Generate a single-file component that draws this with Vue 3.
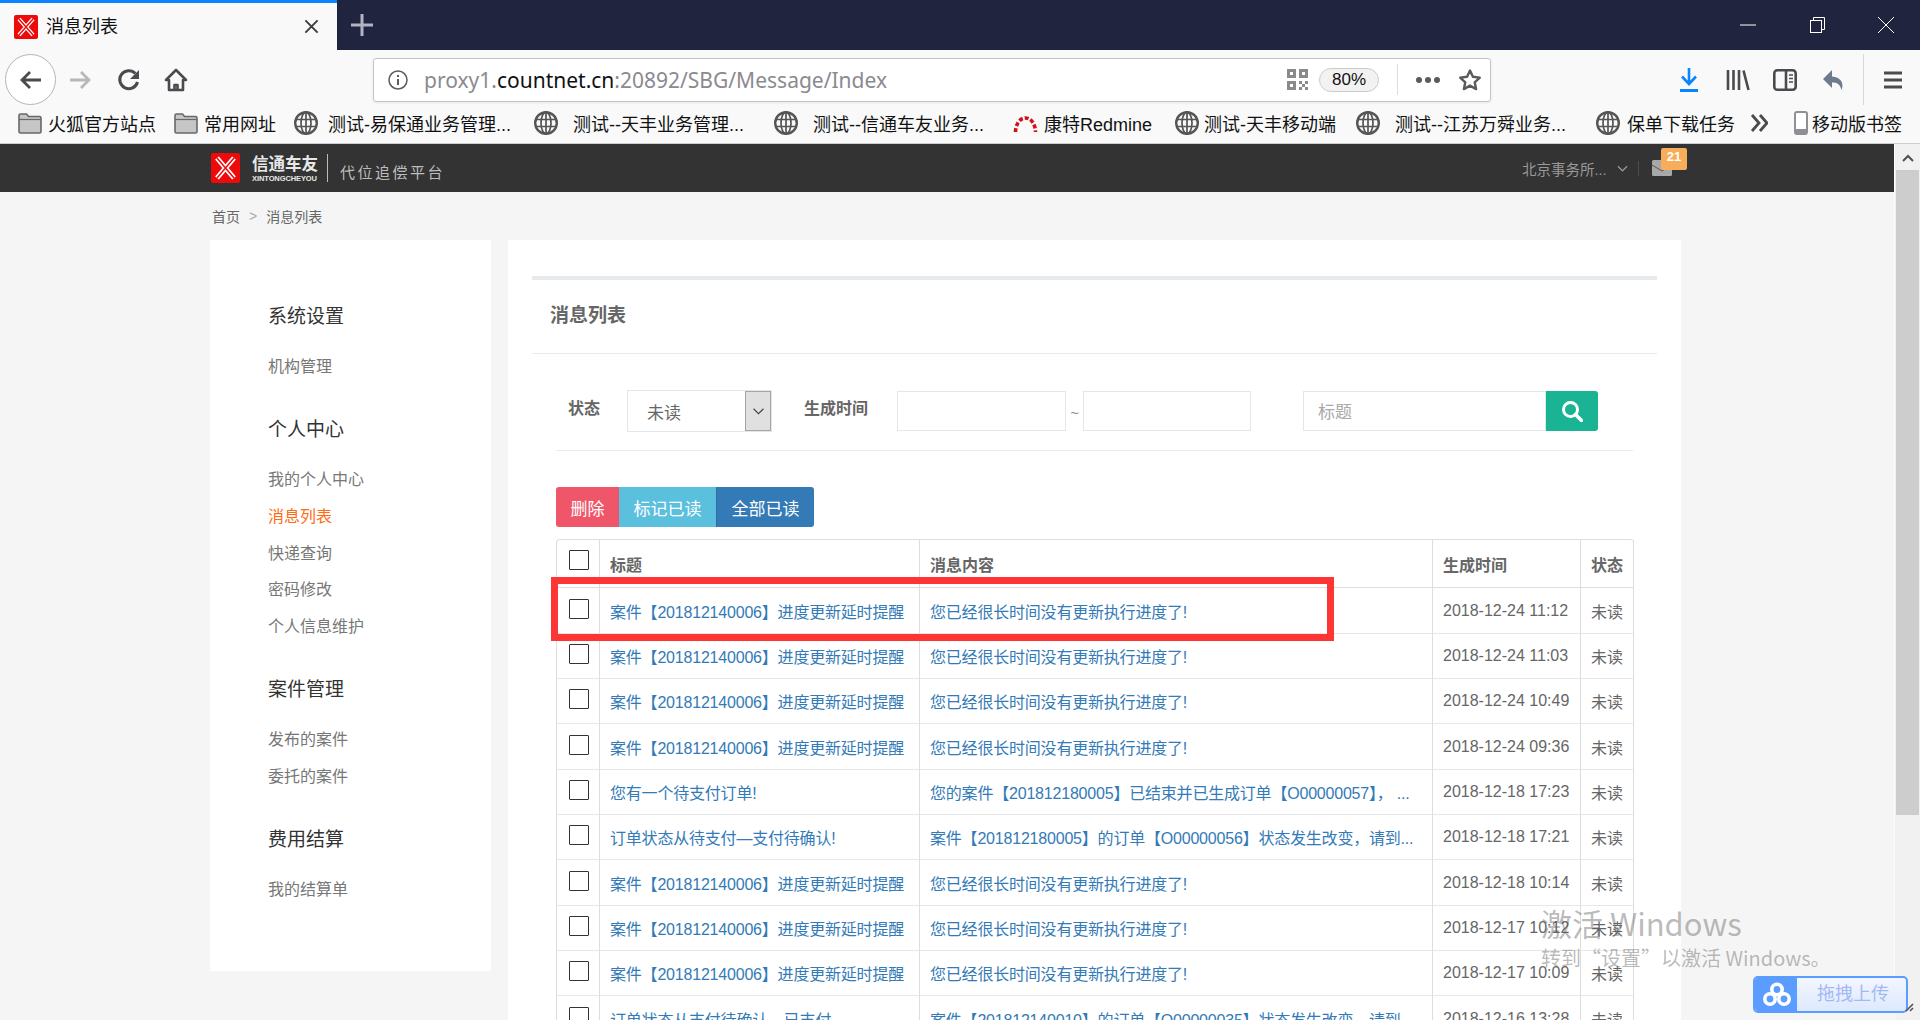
<script setup>
const bookmarks = [
  { icon: 'folder', text: '火狐官方站点', x: 18, w: 156, gap: 6 },
  { icon: 'folder', text: '常用网址', w: 120, gap: 6 },
  { icon: 'globe', text: '测试-易保通业务管理...', w: 240, gap: 10 },
  { icon: 'globe', text: '测试--天丰业务管理...', w: 240, gap: 15 },
  { icon: 'globe', text: '测试--信通车友业务...', w: 239, gap: 15 },
  { icon: 'redmine', text: '康特Redmine', w: 162, gap: 6 },
  { icon: 'globe', text: '测试-天丰移动端', w: 181, gap: 5 },
  { icon: 'globe', text: '测试--江苏万舜业务...', w: 240, gap: 15 },
  { icon: 'globe', text: '保单下载任务', w: 141, gap: 7 }
]
const sideGroups = [
  { title: '系统设置', items: ['机构管理'] },
  { title: '个人中心', items: ['我的个人中心', '消息列表', '快递查询', '密码修改', '个人信息维护'] },
  { title: '案件管理', items: ['发布的案件', '委托的案件'] },
  { title: '费用结算', items: ['我的结算单'] }
]
const t1 = '案件【201812140006】进度更新延时提醒'
const c1 = '您已经很长时间没有更新执行进度了!'
const rows = [
  [t1, c1, '2018-12-24 11:12'],
  [t1, c1, '2018-12-24 11:03'],
  [t1, c1, '2018-12-24 10:49'],
  [t1, c1, '2018-12-24 09:36'],
  ['您有一个待支付订单!', '您的案件【201812180005】已结束并已生成订单【O00000057】， ...', '2018-12-18 17:23'],
  ['订单状态从待支付—支付待确认!', '案件【201812180005】的订单【O00000056】状态发生改变，请到...', '2018-12-18 17:21'],
  [t1, c1, '2018-12-18 10:14'],
  [t1, c1, '2018-12-17 10:12'],
  [t1, c1, '2018-12-17 10:09'],
  ['订单状态从支付待确认—已支付', '案件【201812140010】的订单【O00000035】状态发生改变，请到...', '2018-12-16 13:28']
]
</script>

<template>
  <div class="app">
    <div class="tabbar">
      <div class="tab">
        <svg class="favicon" viewBox="0 0 24 24">
          <rect width="24" height="24" rx="2" fill="#ee0a0a" />
          <path d="M5 4l14 16M19 4L5 20" stroke="#fff" stroke-width="4" fill="none" />
          <path d="M5 4l14 16M19 4L5 20" stroke="#ee0a0a" stroke-width="1.4" fill="none" />
        </svg>
        <span class="tab-title">消息列表</span>
        <svg class="tab-close" viewBox="0 0 16 16"><path d="M1.5 1.5l13 13M14.5 1.5l-13 13" stroke="#3a3a3f" stroke-width="2" /></svg>
      </div>
      <svg class="newtab" viewBox="0 0 22 22"><path d="M11 0v22M0 11h22" stroke="#b2b4c2" stroke-width="3" /></svg>
      <div class="winctl">
        <svg class="w-min" viewBox="0 0 16 16"><path d="M0 8h16" stroke="#fff" stroke-width="1" /></svg>
        <svg class="w-max" viewBox="0 0 15 16" fill="none" stroke="#fff" stroke-width="1"><rect x=".5" y="3.5" width="11" height="12" /><path d="M3.5 3.500V.5h11v12h-3" /></svg>
        <svg class="w-close" viewBox="0 0 16 16"><path d="M0 0l16 16M16 0L0 16" stroke="#fff" stroke-width="1" /></svg>
      </div>
    </div>

    <div class="toolbar">
      <div class="back-circle">
        <svg viewBox="0 0 24 24" class="ic24"><path d="M22 12H3M11 4l-8 8 8 8" fill="none" stroke="#4a4a4f" stroke-width="2.800" /></svg>
      </div>
      <svg viewBox="0 0 24 24" class="ic24 fwd"><path d="M2 12h19M13 4l8 8-8 8" fill="none" stroke="#b8b8ba" stroke-width="2.800" /></svg>
      <svg viewBox="0 0 24 24" class="ic24 reload"><path d="M20.500 14a9 9 0 1 1-2.200-8.500" fill="none" stroke="#4a4a4f" stroke-width="3" /><path d="M22 2v9h-9z" fill="#4a4a4f" /></svg>
      <svg viewBox="0 0 24 24" class="ic24 home"><path d="M12 2L2 12h3v10h14V12h3zM10.500 22v-5h3v5" fill="none" stroke="#4a4a4f" stroke-width="2.600" stroke-linejoin="round" /></svg>
      <div class="urlbar">
        <svg viewBox="0 0 20 20" class="info"><circle cx="10" cy="10" r="9" fill="none" stroke="#5a5a5f" stroke-width="1.500" /><path d="M10 9v6M10 5v2" stroke="#5a5a5f" stroke-width="2" /></svg>
        <div class="url"><span class="dim">proxy1.</span><span class="strong">countnet.cn</span><span class="dim">:20892/SBG/Message/Index</span></div>
        <svg viewBox="0 0 21 21" class="qr">
          <path d="M0 0h9v9H0zM12 0h9v9h-9zM0 12h9v9H0z" fill="#8a8a8a" />
          <path d="M3 3h3v3H3zM15 3h3v3h-3zM3 15h3v3H3z" fill="#fff" />
          <path d="M12 12h3v3h-3zM18 12h3v3h-3zM15 15h3v3h-3zM12 18h3v3h-3zM18 18h3v3h-3z" fill="#8a8a8a" />
        </svg>
        <div class="zoom">80%</div>
        <div class="url-sep"></div>
        <div class="dots"><i></i><i></i><i></i></div>
        <svg viewBox="0 0 24 24" class="ic24 star"><path d="M12 2.500l2.900 6.300 6.900.8-5.100 4.700 1.400 6.800-6.100-3.500-6.100 3.500 1.400-6.800L2.200 9.600l6.900-.8z" fill="none" stroke="#5a5a5f" stroke-width="2.400" stroke-linejoin="round" /></svg>
      </div>
      <svg viewBox="0 0 18 24" class="dl"><path d="M9 0v15M2 8.500l7 7.500 7-7.500" fill="none" stroke="#0a84ff" stroke-width="2.600" /><path d="M0 22.500h18" stroke="#0a84ff" stroke-width="3" /></svg>
      <svg viewBox="0 0 24 24" class="ic24 lib"><path d="M2 2v20M7.500 2v20M13 2v20M17.500 2.500l5 19.500" fill="none" stroke="#4a4a4f" stroke-width="2.600" /></svg>
      <svg viewBox="0 0 24 24" class="ic24 side"><rect x="1.300" y="2.300" width="21.400" height="19.400" rx="3" fill="none" stroke="#4a4a4f" stroke-width="2.600" /><path d="M13 3v18" stroke="#4a4a4f" stroke-width="2.600" /><path d="M16 7h4M16 10.500h4M16 14h4" stroke="#4a4a4f" stroke-width="1.400" /></svg>
      <svg viewBox="0 0 24 24" class="ic24 undo"><path d="M10 2L1 11l9 9v-5.500c5 0 8 1.500 9.500 7.500 3-7-1-13-9.500-13.500z" fill="#6d7b8a" /></svg>
      <div class="tool-sep"></div>
      <svg viewBox="0 0 18 18" class="burger"><path d="M0 2h18M0 9h18M0 16h18" stroke="#4a4a4f" stroke-width="3" /></svg>
    </div>

    <div class="bookmarks">
      <div v-for="b in bookmarks" :key="b.text" class="bm" :style="{ width: b.w + 'px' }">
        <svg v-if="b.icon === 'folder'" viewBox="0 0 24 22" class="bm-ic"><path d="M1 3.500a1.500 1.500 0 0 1 1.500-1.500h6l2 2.500h11A1.500 1.500 0 0 1 23 6v13.500a1.500 1.500 0 0 1-1.500 1.500h-19A1.500 1.500 0 0 1 1 19.500z" fill="#c6c6c6" stroke="#68686a" stroke-width="1.600" /><path d="M1 7.500h22" stroke="#68686a" stroke-width="1.200" /></svg>
        <svg v-else-if="b.icon === 'globe'" viewBox="0 0 24 24" class="bm-ic"><g fill="none" stroke="#555" stroke-width="1.700"><circle cx="12" cy="12" r="10.800" stroke-width="2.400" /><ellipse cx="12" cy="12" rx="5" ry="10.800" /><path d="M1 8.500h22M1 15.500h22M12 1v22" /></g></svg>
        <svg v-else viewBox="0 0 25 22" class="bm-ic redmine"><path d="M2.500 20A10 14 0 0 1 22.500 20" fill="none" stroke="#d3101a" stroke-width="3.600" stroke-dasharray="4 2" /></svg>
        <span class="bm-text" :style="{ marginLeft: b.gap + 'px' }">{{ b.text }}</span>
      </div>
      <svg viewBox="0 0 18 20" class="chev"><path d="M2 2l7 8-7 8M10 2l7 8-7 8" fill="none" stroke="#4a4a4f" stroke-width="2.800" /></svg>
      <svg viewBox="0 0 14 24" class="phone"><rect x="1" y="1" width="12" height="22" rx="2" fill="#fff" stroke="#8f8f94" stroke-width="2" /><path d="M1 18h12v4H1z" fill="#8f8f94" /></svg>
      <span class="bm-text">移动版书签</span>
    </div>

    <div class="page">
      <div class="page-main">
        <header class="head">
          <svg viewBox="0 0 29 30" class="logo">
            <rect width="29" height="30" rx="2" fill="#ee0a0a" />
            <path d="M6 5l17 20M23 5L6 25" stroke="#fff" stroke-width="5" fill="none" />
            <path d="M6 5l17 20M23 5L6 25" stroke="#ee0a0a" stroke-width="1.500" fill="none" />
          </svg>
          <div class="brand">
            <div class="brand-cn">信通车友</div>
            <div class="brand-en">XINTONGCHEYOU</div>
          </div>
          <div class="brand-sep"></div>
          <div class="slogan">代位追偿平台</div>
          <div class="head-right">
            <span class="org">北京事务所...</span>
            <svg viewBox="0 0 12 7" class="org-chev"><path d="M1 1l5 5 5-5" fill="none" stroke="#999" stroke-width="1.300" /></svg>
            <div class="head-sep"></div>
            <div class="mail">
              <svg viewBox="0 0 20 16" class="mail-ic"><rect width="20" height="16" rx="1.500" fill="#a8a8a8" /><path d="M0 5l10 6 10-6" fill="none" stroke="#555" stroke-width="1" /></svg>
              <span class="badge">21</span>
            </div>
          </div>
        </header>

        <div class="crumb"><span>首页</span><span class="crumb-gt">&gt;</span><span>消息列表</span></div>

        <div class="content">
          <aside class="sidebar">
            <section v-for="g in sideGroups" :key="g.title" class="s-group">
              <h3 class="s-title">{{ g.title }}</h3>
              <a v-for="i in g.items" :key="i" class="s-item" :class="{ active: i === '消息列表' }">{{ i }}</a>
            </section>
          </aside>

          <main class="panel">
            <h2 class="panel-title">消息列表</h2>
            <div class="panel-body">
              <div class="filter">
                <label class="f-label f-status">状态</label>
                <div class="select"><span class="select-val">未读</span><span class="select-btn"><svg viewBox="0 0 10 6"><path d="M.5.5L5 5 9.500.5" fill="none" stroke="#444" stroke-width="1" /></svg></span></div>
                <label class="f-label f-time">生成时间</label>
                <input class="inp inp-date" />
                <span class="tilde">~</span>
                <input class="inp inp-date2" />
                <input class="inp inp-title" placeholder="标题" />
                <button class="search"><svg viewBox="0 0 22 22"><circle cx="9.500" cy="9.500" r="7" fill="none" stroke="#fff" stroke-width="3" /><path d="M14.500 14.500l6 6" stroke="#fff" stroke-width="3.600" stroke-linecap="round" /></svg></button>
              </div>
              <div class="actions">
                <button class="btn b-del">删除</button>
                <button class="btn b-mark">标记已读</button>
                <button class="btn b-all">全部已读</button>
              </div>
              <table class="tbl">
                <colgroup><col class="c1" /><col class="c2" /><col class="c3" /><col class="c4" /><col class="c5" /></colgroup>
                <thead>
                  <tr><th><span class="cb"></span></th><th>标题</th><th>消息内容</th><th>生成时间</th><th>状态</th></tr>
                </thead>
                <tbody>
                  <tr v-for="(r, i) in rows" :key="i">
                    <td><span class="cb"></span></td>
                    <td><a>{{ r[0] }}</a></td>
                    <td><a>{{ r[1] }}</a></td>
                    <td>{{ r[2] }}</td>
                    <td>未读</td>
                  </tr>
                </tbody>
              </table>
            </div>
          </main>
        </div>
      </div>

      <div class="vscroll">
        <svg viewBox="0 0 12 8" class="v-up"><path d="M1 7l5-5 5 5" fill="none" stroke="#505050" stroke-width="2" /></svg>
        <div class="v-thumb"></div>
      </div>
    </div>

    <div class="redbox"></div>
    <div class="watermark">
      <div class="wm1">激活 Windows</div>
      <div class="wm2">转到“设置”以激活 Windows。</div>
    </div>
    <div class="upload">
      <span class="up-ic"><svg viewBox="0 0 30 26" fill="none" stroke="#fff" stroke-width="3.600"><circle cx="16" cy="7.500" r="5.200" /><circle cx="9" cy="17" r="5.200" /><circle cx="23" cy="17" r="5.200" /></svg></span>
      <span class="up-text">拖拽上传</span>
    </div>
    <svg class="grip" viewBox="0 0 9 9"><path d="M1 8l7-7M5 8l3-3" stroke="#555" stroke-width="1.600" /></svg>
  </div>
</template>

<style>
html, body { margin: 0; padding: 0; overflow: hidden; }
</style>

<style scoped>
* { box-sizing: border-box; }
.app {
  position: relative; width: 1920px; height: 1020px; overflow: hidden;
  font-family: "Liberation Sans", "Noto Sans CJK SC", sans-serif; color: #666;
  display: flex; flex-direction: column; background: #f9f9fa;
}
svg { display: block; flex: none; }
.tabbar { height: 50px; background: #20243f; display: flex; align-items: flex-start; flex: none; }
.tab { width: 337px; height: 50px; background: #f9f9fa; border-top: 3px solid #0a84ff; display: flex; align-items: center; padding-left: 14px; }
.favicon { width: 24px; height: 24px; }
.tab-title { margin-left: 8px; font-size: 18px; color: #111; width: 258px; padding-bottom: 4px; }
.tab-close { width: 15px; height: 15px; }
.newtab { width: 22px; height: 22px; margin: 14px 0 0 14px; }
.winctl { margin-left: auto; display: flex; align-items: center; height: 50px; }
.w-min { width: 16px; height: 16px; margin-right: 54px; }
.w-max { width: 15px; height: 16px; margin-right: 53px; }
.w-close { width: 16px; height: 16px; margin-right: 26px; }

.toolbar { height: 52px; flex: none; display: flex; align-items: center; padding: 7px 0 0 5px; }
.ic24 { width: 24px; height: 24px; }
.back-circle { width: 51px; height: 51px; flex: none; border-radius: 50%; border: 1px solid #b5b5b5; background: #fff; display: flex; align-items: center; justify-content: center; }
.fwd { margin-left: 12px; }
.reload { margin-left: 25px; }
.home { margin-left: 23px; }
.urlbar { width: 1118px; height: 44px; margin-left: 185px; border: 1px solid #c4c4c4; border-radius: 3px; background: #fff; display: flex; align-items: center; padding-left: 14px; box-shadow: 0 1px 3px rgba(0,0,0,.08); }
.info { width: 20px; height: 20px; }
.url { margin-left: 16px; width: 863px; font-family: "Noto Sans", "Noto Sans CJK SC", sans-serif; font-size: 21px; white-space: nowrap; line-height: 40px; }
.dim { color: #8a8a8f; }
.strong { color: #111; }
.qr { width: 21px; height: 21px; }
.zoom { margin-left: 11px; width: 60px; height: 24px; border: 1px solid #ccc; border-radius: 12px; background: #f2f2f2; font-size: 17px; color: #111; text-align: center; line-height: 22px; }
.url-sep { width: 1px; height: 31px; background: #ddd; margin-left: 18px; }
.dots { margin-left: 18px; display: flex; gap: 3px; }
.dots i { width: 6px; height: 6px; border-radius: 50%; background: #5a5a5f; }
.star { margin-left: 18px; }
.dl { width: 18px; height: 24px; margin-left: 189px; }
.lib { margin-left: 28px; }
.side { margin-left: 23px; }
.undo { margin-left: 25px; }
.tool-sep { width: 1px; height: 51px; background: #d8d8d8; margin-left: 17px; }
.burger { width: 18px; height: 18px; margin-left: 20px; }

.bookmarks { height: 42px; flex: none; display: flex; align-items: center; padding-left: 18px; border-bottom: 1px solid #cfcfcf; white-space: nowrap; }
.bm { display: flex; align-items: center; overflow: hidden; flex: none; }
.bm-ic { width: 24px; height: 24px; }
.redmine { width: 25px; height: 22px; }
.bm-text { font-size: 18px; color: #111; }
.chev { width: 18px; height: 20px; margin-left: 13px; }
.phone { width: 14px; height: 24px; margin-left: 26px; margin-right: 4px; }

.page { flex: 1; display: flex; min-height: 0; background: #f5f5f5; }
.page-main { flex: 1; min-width: 0; overflow: hidden; }
.head { height: 48px; background: #333; display: flex; align-items: center; padding-left: 211px; }
.logo { width: 29px; height: 30px; }
.brand { margin-left: 12px; width: 65px; color: #e8e8e8; text-align: center; }
.brand-cn { font-size: 16.500px; font-weight: 700; line-height: 21px; white-space: nowrap; }
.brand-en { font-size: 7.500px; font-weight: 700; line-height: 8px; letter-spacing: -.1px; white-space: nowrap; }
.brand-sep { width: 1px; height: 28px; background: #bbb; margin-left: 10px; }
.slogan { margin-left: 12px; font-size: 15px; letter-spacing: 2.500px; color: #bdbdbd; margin-top: 6px; }
.head-right { margin-left: auto; display: flex; align-items: center; padding-right: 222px; }
.org { font-size: 14.500px; color: #999; width: 84px; white-space: nowrap; }
.org-chev { width: 11px; height: 7px; margin-left: 11px; }
.head-sep { width: 1px; height: 15px; background: #4c4c4c; margin-left: 10px; }
.mail { position: relative; margin-left: 13px; width: 20px; height: 16px; }
.mail-ic { width: 20px; height: 16px; }
.badge { position: absolute; left: 9px; top: -12px; width: 26px; height: 22px; background: #f8ad5a; border-radius: 2px; color: #fff; font-size: 13px; font-weight: 700; text-align: center; line-height: 18px; }

.crumb { height: 48px; padding-left: 212px; display: flex; align-items: center; font-size: 14px; color: #666; }
.crumb-gt { color: #aaa; margin: 0 9px; }
.content { display: flex; padding-left: 210px; gap: 17px; align-items: flex-start; }
.sidebar { width: 281px; height: 731px; background: #fff; padding: 61px 0 0 58px; }
.s-group { margin-bottom: 28.500px; }
.s-title { margin: 0; font-size: 19px; font-weight: 400; color: #333; line-height: 32px; }
.s-item { display: block; font-size: 16px; color: #777; line-height: 36.700px; }
.s-item:first-of-type { margin-top: 16px; }
.s-item.active { color: #ff6a13; }

.panel { width: 1173px; height: 900px; background: #fff; padding: 36px 24px 0; }
.panel-title { margin: 0; height: 78px; border-top: 4px solid #e7eaec; border-bottom: 1px solid #e7eaec; font-size: 19px; font-weight: 700; color: #666; padding-left: 18px; line-height: 72px; }
.panel-body { padding: 0 24px; }
.filter { height: 97px; padding-top: 37px; border-bottom: 1px solid #e7eaec; display: flex; align-items: flex-start; }
.f-label { font-size: 16px; font-weight: 700; color: #666; line-height: 36px; }
.f-status { margin-left: 12px; width: 32px; }
.select { margin-left: 27px; width: 145px; height: 42px; margin-top: -1px; border: 1px solid #e5e6e7; display: flex; justify-content: space-between; background: #fff; }
.select-val { margin-left: 19px; font-size: 17px; line-height: 46px; color: #666; }
.select-btn { width: 26px; height: 40px; background: #e0e0e0; border: 1px solid #a5a5a5; display: flex; align-items: center; justify-content: center; }
.select-btn svg { width: 11px; height: 7px; }
.f-time { margin-left: 32px; }
.inp { height: 40px; border: 1px solid #e5e6e7; background: #fff; outline: none; padding: 3px 14px 0; font-size: 17px; font-family: inherit; }
.inp::placeholder { color: #a9a9a9; }
.inp-date { margin-left: 29px; width: 169px; }
.tilde { width: 17px; text-align: center; font-size: 14px; color: #888; line-height: 44px; }
.inp-date2 { width: 168px; }
.inp-title { margin-left: 52px; width: 243px; }
.search { width: 52px; height: 40px; border: 0; padding: 0; background: #1ab394; border-radius: 0 3px 3px 0; display: flex; align-items: center; justify-content: center; }
.search svg { width: 22px; height: 22px; }
.actions { display: flex; margin-top: 36px; }
.btn { height: 40px; border: 0; padding: 0; color: #fff; font-size: 17px; font-family: inherit; }
.b-del { width: 63px; background: #ef5669; border-radius: 3px 0 0 3px; }
.b-mark { width: 97px; background: #5bc0de; }
.b-all { width: 98px; background: #337ab7; border-left: 1px solid #2e6da4; border-radius: 0 3px 3px 0; }

.tbl { width: 1077px; margin-top: 12px; table-layout: fixed; border-collapse: separate; border-spacing: 0; border-top: 1px solid #ddd; border-left: 1px solid #ddd; border-top-right-radius: 4px; border-top-left-radius: 4px; font-size: 16px; color: #666; }
.c1 { width: 43px; } .c2 { width: 320px; } .c3 { width: 513px; } .c4 { width: 148px; } .c5 { width: 53px; }
.tbl th, .tbl td { border-right: 1px solid #ddd; border-bottom: 1px solid #e7e7e7; padding: 0 10px; text-align: left; white-space: nowrap; overflow: hidden; }
.tbl th { height: 48px; font-weight: 700; color: #666; border-bottom-color: #ddd; padding-top: 1px; }
.tbl td { height: 45px; }
.tbl tbody tr:nth-child(3n+1) td { height: 46px; }
.tbl a { color: #337ab7; letter-spacing: -.2px; }
.cb { display: block; width: 20px; height: 20px; border: 1px solid #333; border-radius: 1px; background: #fff; margin: -4px 0 0 2px; }
th .cb { margin-top: -8px; }

.vscroll { width: 26px; flex: none; background: #f1f1f1; border-left: 1px solid #fafafa; padding-top: 0; }
.v-up { width: 12px; height: 8px; margin: 10px auto 8px; }
.v-thumb { height: 645px; background: #cdcdcd; margin: 0 1px; }

.redbox { position: absolute; left: 551px; top: 577px; width: 783px; height: 64px; border: 7px solid #fe3535; pointer-events: none; }
.watermark { position: absolute; left: 1541px; top: 902px; pointer-events: none; color: rgba(90,90,90,.42); white-space: nowrap; font-family: "Noto Sans CJK SC", "Noto Sans", sans-serif; }
.wm1 { font-size: 31px; line-height: 42px; }
.wm2 { font-size: 20px; line-height: 28px; }
.upload { position: absolute; left: 1753px; top: 976px; width: 155px; height: 37px; border: 2px solid #5a9cff; border-radius: 5px; display: flex; overflow: hidden; background: linear-gradient(#f2f6ff, #dde9fe); }
.up-ic { width: 42px; background: #5a9cff; display: flex; align-items: center; justify-content: center; }
.up-ic svg { width: 30px; height: 26px; }
.up-text { margin-left: 20px; font-size: 18px; line-height: 33px; color: #a4b8f6; }
.grip { position: absolute; left: 1905px; top: 1003px; width: 9px; height: 9px; }
</style>
